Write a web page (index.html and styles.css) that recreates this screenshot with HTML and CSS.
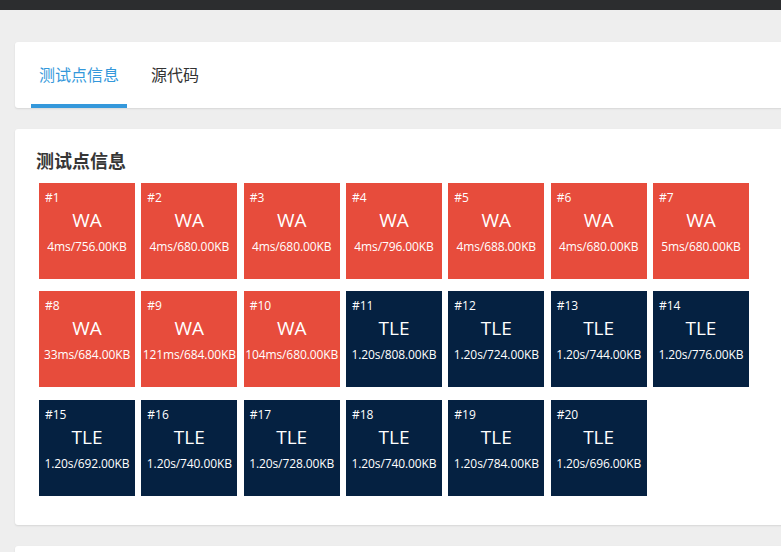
FILE: index.html
```html
<!DOCTYPE html>
<html lang="zh">
<head>
<meta charset="utf-8">
<link rel="stylesheet" href="styles.css">
</head>
<body>
<div class="topbar"></div>
<div class="main">
  <div class="card tabs-card">
    <div class="tab active">测试点信息</div>
    <div class="tab">源代码</div>
  </div>
  <div class="card cases-card">
    <div class="title">测试点信息</div>
    <div class="grid">
      <div class="case wa"><div class="id">#1</div><div class="st">WA</div><div class="info">4ms/756.00KB</div></div>
      <div class="case wa"><div class="id">#2</div><div class="st">WA</div><div class="info">4ms/680.00KB</div></div>
      <div class="case wa"><div class="id">#3</div><div class="st">WA</div><div class="info">4ms/680.00KB</div></div>
      <div class="case wa"><div class="id">#4</div><div class="st">WA</div><div class="info">4ms/796.00KB</div></div>
      <div class="case wa"><div class="id">#5</div><div class="st">WA</div><div class="info">4ms/688.00KB</div></div>
      <div class="case wa"><div class="id">#6</div><div class="st">WA</div><div class="info">4ms/680.00KB</div></div>
      <div class="case wa"><div class="id">#7</div><div class="st">WA</div><div class="info">5ms/680.00KB</div></div>
      <div class="case wa"><div class="id">#8</div><div class="st">WA</div><div class="info">33ms/684.00KB</div></div>
      <div class="case wa"><div class="id">#9</div><div class="st">WA</div><div class="info">121ms/684.00KB</div></div>
      <div class="case wa"><div class="id">#10</div><div class="st">WA</div><div class="info">104ms/680.00KB</div></div>
      <div class="case tle"><div class="id">#11</div><div class="st">TLE</div><div class="info">1.20s/808.00KB</div></div>
      <div class="case tle"><div class="id">#12</div><div class="st">TLE</div><div class="info">1.20s/724.00KB</div></div>
      <div class="case tle"><div class="id">#13</div><div class="st">TLE</div><div class="info">1.20s/744.00KB</div></div>
      <div class="case tle"><div class="id">#14</div><div class="st">TLE</div><div class="info">1.20s/776.00KB</div></div>
      <div class="case tle"><div class="id">#15</div><div class="st">TLE</div><div class="info">1.20s/692.00KB</div></div>
      <div class="case tle"><div class="id">#16</div><div class="st">TLE</div><div class="info">1.20s/740.00KB</div></div>
      <div class="case tle"><div class="id">#17</div><div class="st">TLE</div><div class="info">1.20s/728.00KB</div></div>
      <div class="case tle"><div class="id">#18</div><div class="st">TLE</div><div class="info">1.20s/740.00KB</div></div>
      <div class="case tle"><div class="id">#19</div><div class="st">TLE</div><div class="info">1.20s/784.00KB</div></div>
      <div class="case tle"><div class="id">#20</div><div class="st">TLE</div><div class="info">1.20s/696.00KB</div></div>
    </div>
  </div>
  <div class="card empty-card"></div>
</div>
</body>
</html>
```
FILE: styles.css
```css
html, body {
  margin: 0;
  padding: 0;
  background: #eeeeee;
  overflow: hidden;
  font-family: "Open Sans", "Noto Sans CJK SC", sans-serif;
  color: #333333;
}
.topbar {
  height: 10px;
  background: #2c2d2f;
}
.main {
  padding-left: 15px;
  width: 900px;
}
.card {
  background: #ffffff;
  border-radius: 3px;
  box-shadow: 0 1px 2px rgba(0, 0, 0, 0.1);
}
.tabs-card {
  margin-top: 32px;
  height: 66px;
  display: flex;
  align-items: stretch;
  padding-left: 16px;
  gap: 16px;
}
.tab {
  padding: 0 8px;
  font-size: 16px;
  display: flex;
  align-items: center;
  padding-top: 1px;
  border-bottom: 4px solid transparent;
  color: #333333;
  font-family: "Noto Sans CJK SC", sans-serif;
}
.tab.active {
  color: #3498db;
  border-bottom-color: #3498db;
}
.cases-card {
  margin-top: 21px;
  padding: 20px 22px 29px 21px;
}
.title {
  font-size: 18px;
  font-weight: bold;
  line-height: 22px;
  margin-bottom: 12px;
  font-family: "Noto Sans CJK SC", sans-serif;
  color: #363636;
}
.grid {
  display: flex;
  flex-wrap: wrap;
  column-gap: 6.33px;
  row-gap: 12.3px;
  padding-left: 3px;
  width: 720px;
}
.case {
  width: 96px;
  height: 96px;
  box-sizing: border-box;
  padding: 6px 0 0 6px;
  color: #ffffff;
}
.case.wa { background: #e74c3c; }
.case.tle { background: #052141; }
.id {
  font-size: 12px;
  line-height: 18px;
}
.st {
  font-size: 19px;
  line-height: 26px;
  text-align: center;
  margin-left: -6px;
}
.info {
  font-size: 12px;
  line-height: 18px;
  text-align: center;
  margin-left: -6px;
  margin-top: 5px;
  white-space: nowrap;
  letter-spacing: -0.1px;
}
.empty-card {
  margin-top: 21px;
  height: 100px;
}
```
